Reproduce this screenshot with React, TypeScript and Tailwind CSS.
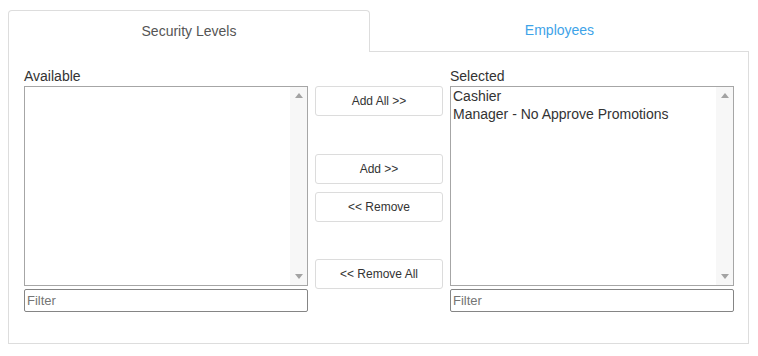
import React from 'react';

const font = { fontFamily: '"Liberation Sans", Arial, sans-serif' };

const ListBox = ({ items }: { items: string[] }) => (
  <div className="relative h-[200px] w-full overflow-hidden border border-[#a6a6a6] bg-white">
    <div className="pr-[18px] pl-[2px]">
      {items.map((item) => (
        <div key={item} className="text-[14px] leading-[18px] text-[#333]">
          {item}
        </div>
      ))}
    </div>
    {/* fake scrollbar */}
    <div className="absolute right-0 top-0 bottom-0 flex w-[17px] flex-col justify-between bg-[#f7f7f7] py-[6px]">
      <div className="mx-auto h-0 w-0 border-x-[4px] border-b-[5px] border-x-transparent border-b-[#a3a3a3]" />
      <div className="mx-auto h-0 w-0 border-x-[4px] border-t-[5px] border-x-transparent border-t-[#a3a3a3]" />
    </div>
  </div>
);

const Filter = () => (
  <input
    placeholder="Filter"
    className="mt-[3px] h-[23px] w-full rounded-[2px] border border-[#858585] px-[2px] text-[13px] text-[#333] placeholder:text-[#757575] outline-none"
    style={font}
  />
);

const MoveButton = ({ label, className = '' }: { label: string; className?: string }) => (
  <button
    className={`h-[30px] w-full rounded-[3px] border border-[#dcdcdc] bg-white text-[12px] text-[#333] ${className}`}
    style={font}
  >
    {label}
  </button>
);

export default function App() {
  return (
    <div className="min-h-screen bg-white pl-[8px] pt-[10px]" style={font}>
      <div className="w-[741px]">
        {/* Tabs */}
        <div className="flex h-[42px]">
          <div className="flex w-[362px] items-center justify-center rounded-t-[4px] border border-b-0 border-[#dddddd] bg-white text-[14px] text-[#555]">
            Security Levels
          </div>
          <div className="flex flex-1 items-center justify-center border-b border-[#dddddd] text-[14px] text-[#3ea3e8]">
            Employees
          </div>
        </div>

        {/* Panel */}
        <div className="flex gap-[7px] border border-t-0 border-[#dddddd] pl-[15px] pr-[14px] pt-[15px] pb-[31px]">
          <div className="flex w-[284px] shrink-0 flex-col">
            <div className="h-[19px] text-[14px] leading-[18px] text-[#333]">Available</div>
            <ListBox items={[]} />
            <Filter />
          </div>

          <div className="flex w-[128px] shrink-0 flex-col pt-[19px]">
            <MoveButton label="Add All >>" />
            <MoveButton label="Add >>" className="mt-[38px]" />
            <MoveButton label="<< Remove" className="mt-[8px]" />
            <MoveButton label="<< Remove All" className="mt-[37px]" />
          </div>

          <div className="flex w-[284px] shrink-0 flex-col">
            <div className="h-[19px] text-[14px] leading-[18px] text-[#333]">Selected</div>
            <ListBox items={['Cashier', 'Manager - No Approve Promotions']} />
            <Filter />
          </div>
        </div>
      </div>
    </div>
  );
}
